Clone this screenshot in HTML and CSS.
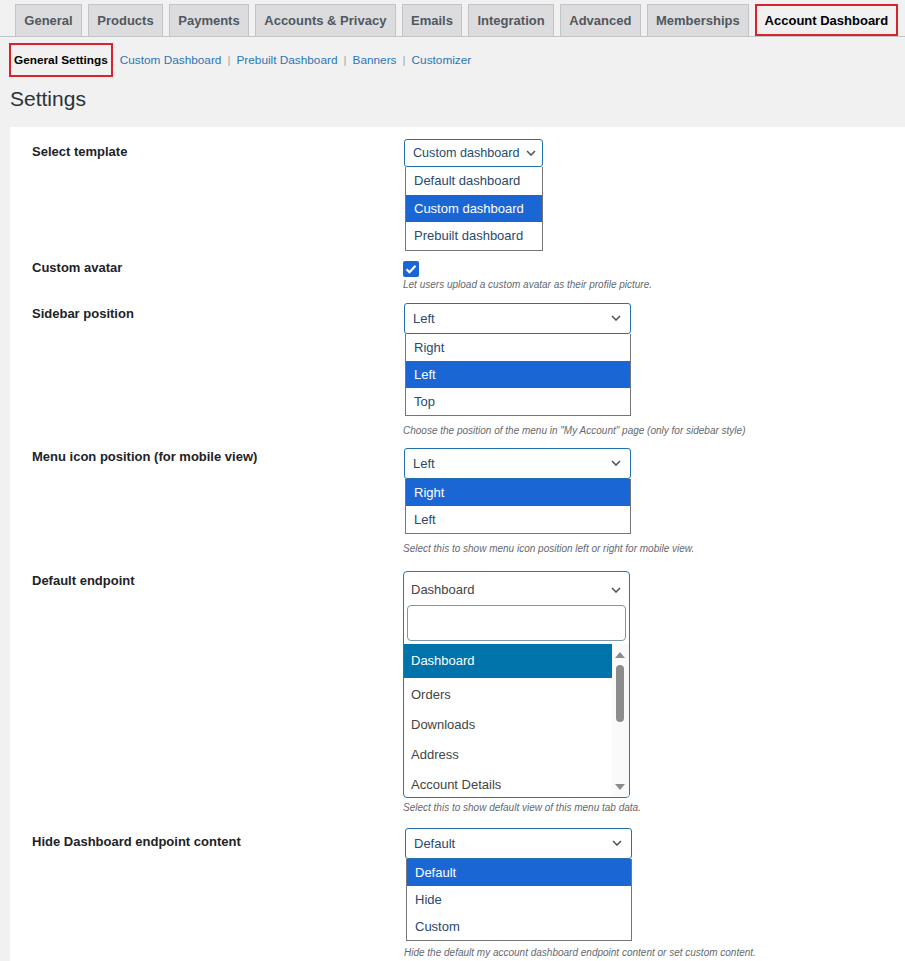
FILE: index.html
```html
<!DOCTYPE html>
<html lang="en">
<head>
  <meta charset="UTF-8" />
  <meta name="viewport" content="width=device-width, initial-scale=1.0" />
  <title>Account Dashboard Settings</title>
  <link rel="stylesheet" href="styles.css">
</head>
<body>

  <nav class="tabs">
    <a class="tab">General</a>
    <a class="tab">Products</a>
    <a class="tab">Payments</a>
    <a class="tab">Accounts &amp; Privacy</a>
    <a class="tab">Emails</a>
    <a class="tab">Integration</a>
    <a class="tab">Advanced</a>
    <a class="tab">Memberships</a>
    <a class="tab tab-active">Account Dashboard</a>
  </nav>

  <div class="subnav">
    <span class="subnav-current">General Settings</span>
    <a>Custom Dashboard</a><span class="sep">|</span>
    <a>Prebuilt Dashboard</a><span class="sep">|</span>
    <a>Banners</a><span class="sep">|</span>
    <a>Customizer</a>
  </div>

  <h1 class="page-title">Settings</h1>

  <div class="panel">

    <!-- Select template -->
    <div class="row row-template">
      <div class="label">Select template</div>
      <div class="field">
        <div class="select select-sm">
          <span>Custom dashboard</span>
          <svg class="chev" width="10" height="6" viewBox="0 0 10 6"><path d="M1 1l4 4 4-4" fill="none" stroke="#50575e" stroke-width="1.6"/></svg>
        </div>
        <ul class="options options-sm">
          <li>Default dashboard</li>
          <li class="on">Custom dashboard</li>
          <li>Prebuilt dashboard</li>
        </ul>
      </div>
    </div>

    <!-- Custom avatar -->
    <div class="row row-check">
      <div class="label">Custom avatar</div>
      <div class="field">
        <span class="checkbox">
          <svg width="12" height="10" viewBox="0 0 12 10"><path d="M1.5 5.2l3 3 6-6.5" fill="none" stroke="#fff" stroke-width="2.2"/></svg>
        </span>
        <p class="desc">Let users upload a custom avatar as their profile picture.</p>
      </div>
    </div>

    <!-- Sidebar position -->
    <div class="row row-sidebar">
      <div class="label">Sidebar position</div>
      <div class="field">
        <div class="select">
          <span>Left</span>
          <svg class="chev" width="10" height="6" viewBox="0 0 10 6"><path d="M1 1l4 4 4-4" fill="none" stroke="#50575e" stroke-width="1.6"/></svg>
        </div>
        <ul class="options">
          <li>Right</li>
          <li class="on">Left</li>
          <li>Top</li>
        </ul>
        <p class="desc">Choose the position of the menu in "My Account" page (only for sidebar style)</p>
      </div>
    </div>

    <!-- Menu icon position -->
    <div class="row row-menu">
      <div class="label">Menu icon position (for mobile view)</div>
      <div class="field">
        <div class="select">
          <span>Left</span>
          <svg class="chev" width="10" height="6" viewBox="0 0 10 6"><path d="M1 1l4 4 4-4" fill="none" stroke="#50575e" stroke-width="1.6"/></svg>
        </div>
        <ul class="options">
          <li class="on">Right</li>
          <li>Left</li>
        </ul>
        <p class="desc">Select this to show menu icon position left or right for mobile view.</p>
      </div>
    </div>

    <!-- Default endpoint (searchable select) -->
    <div class="row row-endpoint">
      <div class="label">Default endpoint</div>
      <div class="field">
        <div class="s2">
          <div class="s2-head">
            <span>Dashboard</span>
            <svg class="chev" width="10" height="6" viewBox="0 0 10 6"><path d="M1 1l4 4 4-4" fill="none" stroke="#50575e" stroke-width="1.6"/></svg>
          </div>
          <div class="s2-search"></div>
          <div class="s2-body">
            <ul class="s2-list">
              <li class="on">Dashboard</li>
              <li>Orders</li>
              <li>Downloads</li>
              <li>Address</li>
              <li>Account Details</li>
            </ul>
            <div class="scrollbar">
              <span class="arrow-up"></span>
              <span class="thumb"></span>
              <span class="arrow-down"></span>
            </div>
          </div>
        </div>
        <p class="desc">Select this to show default view of this menu tab data.</p>
      </div>
    </div>

    <!-- Hide Dashboard endpoint content -->
    <div class="row row-hide">
      <div class="label">Hide Dashboard endpoint content</div>
      <div class="field field-shift">
        <div class="select">
          <span>Default</span>
          <svg class="chev" width="10" height="6" viewBox="0 0 10 6"><path d="M1 1l4 4 4-4" fill="none" stroke="#50575e" stroke-width="1.6"/></svg>
        </div>
        <ul class="options">
          <li class="on">Default</li>
          <li>Hide</li>
          <li>Custom</li>
        </ul>
        <p class="desc">Hide the default my account dashboard endpoint content or set custom content.</p>
      </div>
    </div>

  </div>

</body>
</html>
```

FILE: styles.css
```css
:root {
  --fundo: #f1f1f1;
  --texto: #1d2327;
  --azul: #2271b1;
  --azul-link: #2d75b6;
  --marcado: #1a66d4;
  --opcao: #284a6e;
  --vermelho: #d7232b;
}

* {
  box-sizing: border-box;
}

body {
  font-family: "Liberation Sans", Arial, sans-serif;
  background-color: var(--fundo);
  color: var(--texto);
  margin: 0;
  padding: 0;
  overflow: hidden;
}

ul {
  list-style: none;
  margin: 0;
  padding: 0;
}

/* abas do topo */
.tabs {
  display: flex;
  gap: 6px;
  padding: 4px 0 0 15px;
  border-bottom: 1px solid #c3c4c7;
  height: 37px;
}

.tab {
  display: flex;
  align-items: center;
  height: 32px;
  padding: 0 8.3px;
  background-color: #dcdcde;
  border: 1px solid #c3c4c7;
  border-bottom: none;
  color: #50575e;
  font-size: 13px;
  font-weight: bold;
  white-space: nowrap;
}

.tab-active {
  background-color: #f0f0f1;
  color: #000;
  border: 2px solid var(--vermelho);
  height: 32px;
  padding: 0 7.5px;
}

/* sub menu */
.subnav {
  display: flex;
  align-items: center;
  height: 34px;
  margin-top: 6px;
  padding-left: 9px;
  font-size: 11.8px;
  color: var(--azul-link);
}

.subnav-current {
  display: flex;
  align-items: center;
  height: 34px;
  padding: 0 3px;
  border: 2px solid var(--vermelho);
  color: #000;
  font-weight: bold;
  margin-right: 7px;
}

.sep {
  color: #a7aaad;
  margin: 0 6px;
}

.page-title {
  font-size: 21px;
  font-weight: normal;
  color: #2c3338;
  margin: 9px 0 0 10px;
  line-height: 26px;
}

/* painel branco */
.panel {
  background-color: #fff;
  margin: 15px 0 0 10px;
  padding: 12px 0 30px 22px;
}

.row {
  display: grid;
  grid-template-columns: 372px 1fr;
  margin-bottom: 14px;
}

.row-template {
  margin-bottom: 10px;
}

.row-check {
  margin-bottom: 12px;
}

.row-sidebar {
  margin-bottom: 11px;
}

.row-menu {
  margin-bottom: 16px;
}

.row-endpoint {
  margin-bottom: 14px;
}

.label {
  font-size: 13px;
  font-weight: bold;
  line-height: 18px;
  padding-top: 2px;
}

.row-template .label {
  padding-top: 4px;
}

.row-check .label {
  padding-top: 0;
  margin-top: -2px;
}

.row-menu .label {
  padding-top: 0;
}

.row-endpoint .label {
  padding-top: 1px;
}

.row-hide .label {
  padding-top: 5px;
}

.field-shift {
  padding-left: 1px;
}

/* caixa de select fechada */
.select {
  display: flex;
  align-items: center;
  justify-content: space-between;
  width: 227px;
  height: 31px;
  padding: 0 9px 0 8px;
  border: 1px solid var(--azul);
  border-radius: 3px;
  font-size: 13px;
  color: var(--opcao);
  background-color: #fff;
}

.select-sm {
  width: 139px;
  height: 28px;
  padding: 0 6px 0 8px;
  font-size: 12.6px;
}

.options {
  width: 226px;
  margin-left: 1px;
  border: 1px solid #767676;
  border-top: none;
}

.options-sm {
  width: 138px;
}

.options li {
  height: 27px;
  line-height: 27px;
  padding-left: 8px;
  font-size: 13px;
  color: var(--opcao);
}

.options-sm li {
  height: 27.5px;
  line-height: 27.5px;
}

.options li.on {
  background-color: var(--marcado);
  color: #fff;
}

/* checkbox */
.checkbox {
  display: flex;
  align-items: center;
  justify-content: center;
  width: 16px;
  height: 16px;
  margin-left: -1px;
  border-radius: 2px;
  background-color: var(--marcado);
}

.desc {
  margin: 9px 0 0 -1px;
  font-size: 10px;
  font-style: italic;
  color: #646970;
  line-height: 12px;
}

.row-check .desc {
  margin-top: 2px;
}

.row-endpoint .desc {
  margin-top: 4px;
}

.row-hide .desc {
  margin-top: 6px;
}

/* select com busca */
.s2 {
  width: 227px;
  margin-left: -1px;
  border: 1px solid #1a7dbb;
  border-radius: 4px;
  background-color: #fff;
  overflow: hidden;
}

.s2-head {
  display: flex;
  align-items: center;
  justify-content: space-between;
  height: 33px;
  padding: 3px 8px 0 7px;
  font-size: 13px;
  color: #444;
}

.s2-search {
  height: 36px;
  margin: 0 3px;
  border: 1px solid #7d95ad;
  border-radius: 4px;
}

.s2-body {
  display: flex;
  margin-top: 3px;
  height: 153px;
}

.s2-list {
  flex: 1;
}

.s2-list li {
  height: 30px;
  line-height: 30px;
  padding-left: 7px;
  font-size: 13px;
  color: #444;
}

.s2-list li.on {
  height: 34px;
  line-height: 34px;
  margin-bottom: 2px;
  background-color: #0073aa;
  color: #fff;
}

.scrollbar {
  position: relative;
  width: 17px;
  background-color: #fafafa;
}

.thumb {
  position: absolute;
  left: 4px;
  top: 21px;
  width: 8px;
  height: 57px;
  border-radius: 4px;
  background-color: #8c8c8c;
}

.arrow-up,
.arrow-down {
  position: absolute;
  left: 3px;
  width: 0;
  height: 0;
  border-left: 5px solid transparent;
  border-right: 5px solid transparent;
}

.arrow-up {
  top: 8px;
  border-bottom: 6px solid #8c8c8c;
}

.arrow-down {
  bottom: 7px;
  border-top: 6px solid #8c8c8c;
}
```
